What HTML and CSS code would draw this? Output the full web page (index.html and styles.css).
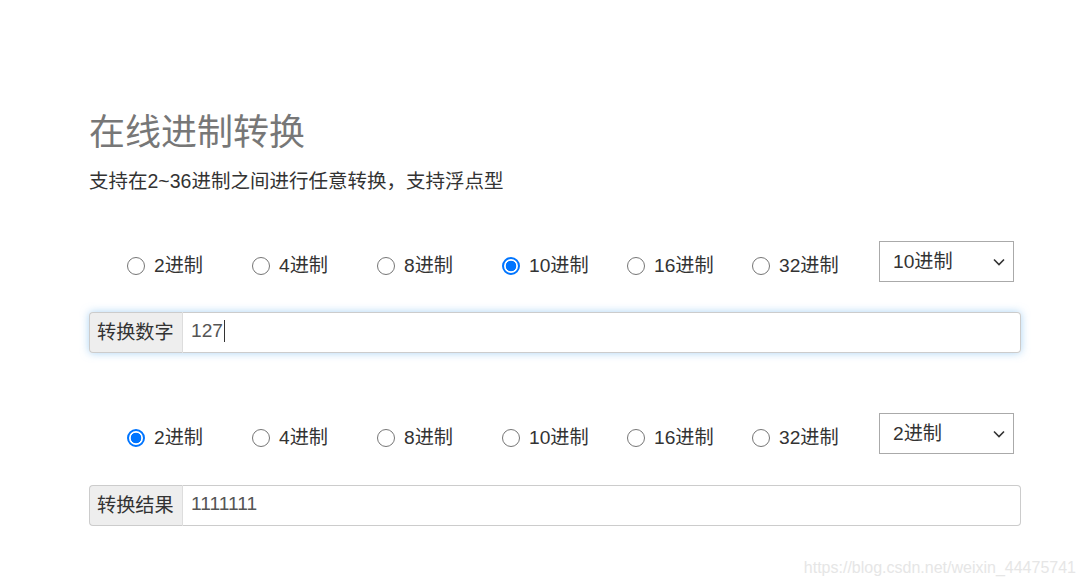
FILE: index.html
```html
<!DOCTYPE html>
<html lang="zh-CN">
<head>
<meta charset="utf-8">
<title>在线进制转换</title>
<link rel="stylesheet" href="styles.css">
</head>
<body>
<main class="page">
  <h1 class="title">在线进制转换</h1>
  <p class="subtitle">支持在2~36进制之间进行任意转换，支持浮点型</p>

  <div class="radio-row row-first">
    <label class="radio"><span class="dot"></span>2进制</label>
    <label class="radio"><span class="dot"></span>4进制</label>
    <label class="radio"><span class="dot"></span>8进制</label>
    <label class="radio"><span class="dot checked"></span>10进制</label>
    <label class="radio"><span class="dot"></span>16进制</label>
    <label class="radio"><span class="dot"></span>32进制</label>
    <div class="select"><span>10进制</span><svg class="chev" width="12" height="8" viewBox="0 0 12 8"><path d="M1 1.5 L6 6.5 L11 1.5" fill="none" stroke="#333" stroke-width="1.6"/></svg></div>
  </div>

  <div class="input-group group-first focused">
    <span class="addon">转换数字</span>
    <div class="field">127<span class="caret"></span></div>
  </div>

  <div class="radio-row row-second">
    <label class="radio"><span class="dot checked"></span>2进制</label>
    <label class="radio"><span class="dot"></span>4进制</label>
    <label class="radio"><span class="dot"></span>8进制</label>
    <label class="radio"><span class="dot"></span>10进制</label>
    <label class="radio"><span class="dot"></span>16进制</label>
    <label class="radio"><span class="dot"></span>32进制</label>
    <div class="select"><span>2进制</span><svg class="chev" width="12" height="8" viewBox="0 0 12 8"><path d="M1 1.5 L6 6.5 L11 1.5" fill="none" stroke="#333" stroke-width="1.6"/></svg></div>
  </div>

  <div class="input-group group-second">
    <span class="addon">转换结果</span>
    <div class="field">1111111</div>
  </div>
</main>
<div class="watermark">https://blog.csdn.net/weixin_44475741</div>
</body>
</html>
```

FILE: styles.css
```css
html, body {
  margin: 0;
  padding: 0;
  background: #fff;
}
body {
  font-family: "Liberation Sans", "Noto Sans CJK SC", sans-serif;
  color: #333;
  width: 1085px;
  height: 583px;
  overflow: hidden;
  position: relative;
}
.page {
  padding: 113px 0 0 89px;
  width: 932px;
}
.title {
  margin: 0;
  font-size: 36px;
  line-height: 40px;
  font-weight: 400;
  color: #777;
}
.subtitle {
  margin: 15px 0 0;
  font-size: 19.5px;
  line-height: 26px;
  color: #333;
}
.radio-row {
  display: flex;
  align-items: center;
  height: 41px;
  padding-left: 38px;
}
.row-first { margin-top: 47px; }
.row-second { margin-top: 60px; }
.radio {
  flex: none;
  width: 125px;
  display: flex;
  align-items: center;
  font-size: 19.2px;
  line-height: 24px;
  margin-top: 9px;
  color: #333;
}
.dot {
  flex: none;
  width: 18px;
  height: 18px;
  box-sizing: border-box;
  border: 1px solid #767676;
  border-radius: 50%;
  margin-right: 9px;
}
.dot.checked {
  border: 2px solid #0075ff;
  background: radial-gradient(circle, #0075ff 0 5px, #fff 5.6px);
}
.select {
  flex: none;
  box-sizing: border-box;
  width: 135px;
  height: 41px;
  margin-left: 2px;
  border: 1px solid #aaa;
  display: flex;
  align-items: center;
  justify-content: space-between;
  padding: 0 8px 4px 13px;
  font-size: 19.2px;
  color: #333;
}
.chev { margin-top: 4px; }
.input-group {
  display: flex;
  height: 41px;
  box-sizing: border-box;
  border-radius: 4px;
}
.group-first { margin-top: 30px; }
.group-second { margin-top: 31px; }
.focused {
  box-shadow: 0 0 9px rgba(102, 175, 233, 0.55);
}
.addon {
  flex: none;
  width: 94px;
  box-sizing: border-box;
  background: #eee;
  border: 1px solid #ccc;
  border-right: 1px solid #ddd;
  border-radius: 4px 0 0 4px;
  padding: 0 0 3px 7px;
  font-size: 19.2px;
  display: flex;
  align-items: center;
  color: #333;
}
.field {
  flex: 1;
  box-sizing: border-box;
  border: 1px solid #ccc;
  border-left: none;
  border-radius: 0 4px 4px 0;
  padding: 0 0 3px 8px;
  font-size: 19.2px;
  display: flex;
  align-items: center;
  color: #555;
  background: #fff;
}
.caret {
  display: inline-block;
  width: 1px;
  height: 22px;
  background: #333;
  margin-left: 1px;
}
.watermark {
  position: absolute;
  right: 9px;
  bottom: 6px;
  font-family: "Liberation Sans", Arial, sans-serif;
  font-size: 16px;
  color: #e6e6e6;
}
```
